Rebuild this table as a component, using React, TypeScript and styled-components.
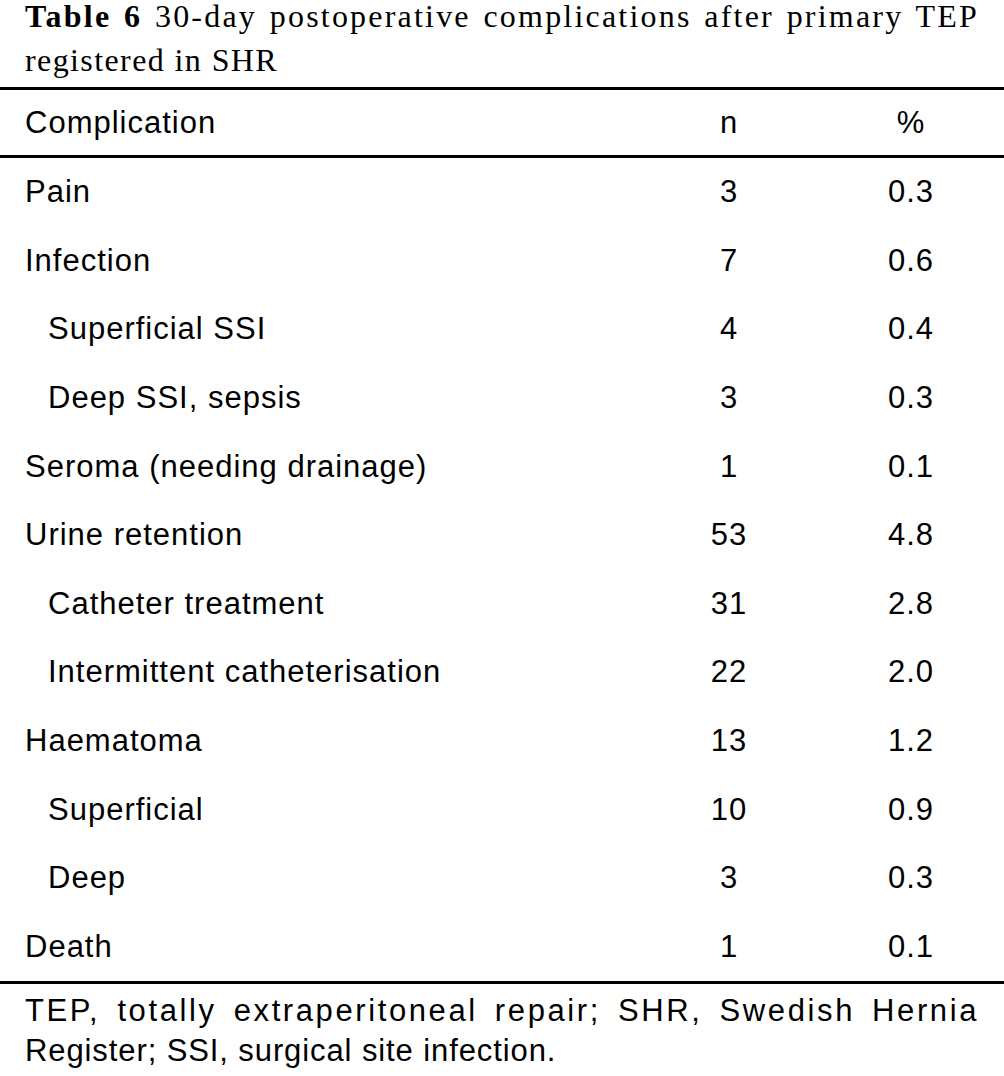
import React from "react";
import styled, { createGlobalStyle } from "styled-components";

const Global = createGlobalStyle`
  html, body { margin: 0; padding: 0; background: #ffffff; }
  body { width: 1004px; }
`;

const Page = styled.div`
  width: 1004px;
  color: #000;
`;

const Caption = styled.div`
  padding: 0 25px;
  font-family: "Liberation Serif", "Times New Roman", serif;
  font-size: 32px;
`;

const CaptionLine = styled.div<{ $h: number; $justify?: boolean; $ls: number }>`
  height: ${(p) => p.$h}px;
  line-height: ${(p) => p.$h}px;
  letter-spacing: ${(p) => p.$ls}px;
  text-align: justify;
  text-align-last: ${(p) => (p.$justify ? "justify" : "left")};
`;

const Label = styled.b`
  font-weight: 700;
`;

const Table = styled.div`
  border-top: 3px solid #000;
  border-bottom: 3px solid #000;
  font-family: "Liberation Sans", Arial, sans-serif;
  font-size: 31px;
  letter-spacing: 1px;
`;

const Row = styled.div<{ $head?: boolean }>`
  display: grid;
  grid-template-columns: 1fr 178px 186px;
  align-items: center;
  height: ${(p) => (p.$head ? 65 : 68.6)}px;
  border-bottom: ${(p) => (p.$head ? "3px solid #000" : "none")};
  box-sizing: content-box;
`;

const NameCell = styled.div<{ $indent?: boolean }>`
  padding-left: ${(p) => (p.$indent ? 48 : 25)}px;
  white-space: nowrap;
`;

const NumCell = styled.div`
  text-align: center;
`;

const Note = styled.div`
  padding: 7px 25px 0 25px;
  font-family: "Liberation Sans", Arial, sans-serif;
  font-size: 31px;
  line-height: 40px;
`;

const NoteLine = styled.div<{ $justify?: boolean; $ls: number }>`
  letter-spacing: ${(p) => p.$ls}px;
  text-align: justify;
  text-align-last: ${(p) => (p.$justify ? "justify" : "left")};
`;

type Item = { name: string; n: string; pct: string; sub?: boolean };

const rows: Item[] = [
  { name: "Pain", n: "3", pct: "0.3" },
  { name: "Infection", n: "7", pct: "0.6" },
  { name: "Superficial SSI", n: "4", pct: "0.4", sub: true },
  { name: "Deep SSI, sepsis", n: "3", pct: "0.3", sub: true },
  { name: "Seroma (needing drainage)", n: "1", pct: "0.1" },
  { name: "Urine retention", n: "53", pct: "4.8" },
  { name: "Catheter treatment", n: "31", pct: "2.8", sub: true },
  { name: "Intermittent catheterisation", n: "22", pct: "2.0", sub: true },
  { name: "Haematoma", n: "13", pct: "1.2" },
  { name: "Superficial", n: "10", pct: "0.9", sub: true },
  { name: "Deep", n: "3", pct: "0.3", sub: true },
  { name: "Death", n: "1", pct: "0.1" },
];

export default function App() {
  return (
    <Page>
      <Global />
      <Caption>
        <CaptionLine $h={33} $ls={2.2} $justify>
          <Label>Table 6</Label> 30-day postoperative complications after primary TEP
        </CaptionLine>
        <CaptionLine $h={54} $ls={1.4}>registered in SHR</CaptionLine>
      </Caption>
      <Table>
        <Row $head>
          <NameCell>Complication</NameCell>
          <NumCell>n</NumCell>
          <NumCell>%</NumCell>
        </Row>
        {rows.map((r) => (
          <Row key={r.name + r.n}>
            <NameCell $indent={r.sub}>{r.name}</NameCell>
            <NumCell>{r.n}</NumCell>
            <NumCell>{r.pct}</NumCell>
          </Row>
        ))}
      </Table>
      <Note>
        <NoteLine $justify $ls={2.6}>TEP, totally extraperitoneal repair; SHR, Swedish Hernia</NoteLine>
        <NoteLine $ls={0.9}>Register; SSI, surgical site infection.</NoteLine>
      </Note>
    </Page>
  );
}
